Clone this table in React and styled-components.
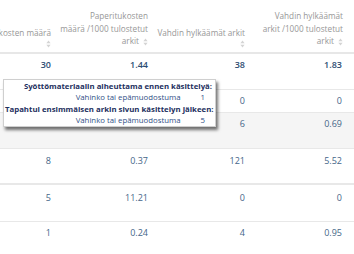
import React from "react";
import styled, { createGlobalStyle } from "styled-components";

const Global = createGlobalStyle`
  html, body { margin: 0; padding: 0; background: #ffffff; }
  body { font-family: "Open Sans", "Noto Sans", sans-serif; }
`;

const Viewport = styled.div`
  width: 354px;
  height: 254px;
  overflow: hidden;
  position: relative;
  background: #fff;
`;

const Table = styled.div`
  margin-left: -34px;
  width: 388px;
`;

const cols = "97px 97px 97px 97px";

const HeaderRow = styled.div`
  display: grid;
  grid-template-columns: ${cols};
  height: 52px;
  border-bottom: 2px solid #e7e7e7;
`;

const HeaderCell = styled.div`
  display: flex;
  flex-direction: column;
  justify-content: flex-end;
  align-items: flex-end;
  padding: 0 ${(p) => p.$pr || 12}px 4px 0;
  font-size: 8.2px;
  line-height: 12.6px;
  color: #979797;
  text-align: right;
`;

const HeaderLine = styled.span`
  display: flex;
  align-items: center;
  gap: 4px;
  white-space: nowrap;
`;

const SortIcon = () => (
  <svg width="5" height="8" viewBox="0 0 5 8">
    <path d="M2.5 0.5 L4.6 3.2 L0.4 3.2 Z" fill="#d4d4d4" />
    <path d="M2.5 7.5 L4.6 4.8 L0.4 4.8 Z" fill="#d4d4d4" />
  </svg>
);

const Row = styled.div`
  display: grid;
  grid-template-columns: ${cols};
  height: ${(p) => p.$h}px;
  box-sizing: border-box;
  border-bottom: ${(p) => p.$bw || 1}px solid #e8e8e8;
  background: ${(p) => (p.$shade ? "#f5f5f5" : "#fff")};
`;

const Cell = styled.div`
  padding: ${(p) => p.$pt || 5}px 12px 0 0;
  font-size: 9px;
  line-height: 12px;
  text-align: right;
  color: ${(p) => (p.$strong ? "#2d4d73" : "#456688")};
  font-weight: ${(p) => (p.$strong ? 600 : 400)};
`;

const Tooltip = styled.div`
  position: absolute;
  left: 3px;
  top: 79px;
  width: 213px;
  height: 48px;
  box-sizing: border-box;
  background: #fff;
  border: 1px solid #cfcfcf;
  box-shadow: 2px 3px 3px rgba(0, 0, 0, 0.55);
  padding: 1px 3px 0 1px;
  display: grid;
  grid-template-columns: 1fr auto;
  font-family: "Open Sans", sans-serif;
  font-size: 7.8px;
  line-height: 10.7px;
  text-align: right;
`;

const TipHead = styled.div`
  grid-column: 1 / span 2;
  font-weight: 700;
  font-size: 7.8px;
  color: #1d2f5e;
  white-space: nowrap;
`;

const TipLabel = styled.div`
  color: #2f4f86;
  white-space: nowrap;
`;

const TipValue = styled.div`
  color: #2f4f86;
  padding: 0 7px 0 20px;
`;

const headers = [
  { lines: ["Paperitukosten määrä"], iconOwnLine: true },
  { lines: ["Paperitukosten", "määrä /1000 tulostetut", "arkit"] },
  { lines: ["Vahdin hylkäämät arkit"], iconOwnLine: true },
  { lines: ["Vahdin hylkäämät", "arkit /1000 tulostetut", "arkit"], pr: 11 },
];

const rows = [
  { h: 36, strong: true, v: ["30", "1.44", "38", "1.83"] },
  { h: 23, v: ["", "", "0", "0"] },
  { h: 36, shade: true, v: ["", "", "6", "0.69"] },
  { h: 36, bw: 2, pt: 6, v: ["8", "0.37", "121", "5.52"] },
  { h: 37, pt: 7, v: ["5", "11.21", "0", "0"] },
  { h: 40, pt: 5, v: ["1", "0.24", "4", "0.95"] },
];

export default function App() {
  return (
    <>
      <Global />
      <Viewport>
        <Table>
          <HeaderRow>
            {headers.map((h, i) => (
              <HeaderCell key={i} $pr={h.pr}>
                {h.lines.map((l, j) => (
                  <HeaderLine key={j}>
                    {l}
                    {!h.iconOwnLine && j === h.lines.length - 1 && <SortIcon />}
                  </HeaderLine>
                ))}
                {h.iconOwnLine && (
                  <HeaderLine>
                    <SortIcon />
                  </HeaderLine>
                )}
              </HeaderCell>
            ))}
          </HeaderRow>
          {rows.map((r, i) => (
            <Row key={i} $h={r.h} $bw={r.bw} $shade={r.shade}>
              {r.v.map((v, j) => (
                <Cell key={j} $strong={r.strong} $pt={r.pt}>
                  {v}
                </Cell>
              ))}
            </Row>
          ))}
        </Table>
        <Tooltip>
          <TipHead>Syöttömateriaalin aiheuttama ennen käsittelyä:</TipHead>
          <TipLabel>Vahinko tai epämuodostuma</TipLabel>
          <TipValue>1</TipValue>
          <TipHead>Tapahtui ensimmäisen arkin sivun käsittelyn jälkeen:</TipHead>
          <TipLabel>Vahinko tai epämuodostuma</TipLabel>
          <TipValue>5</TipValue>
        </Tooltip>
      </Viewport>
    </>
  );
}
